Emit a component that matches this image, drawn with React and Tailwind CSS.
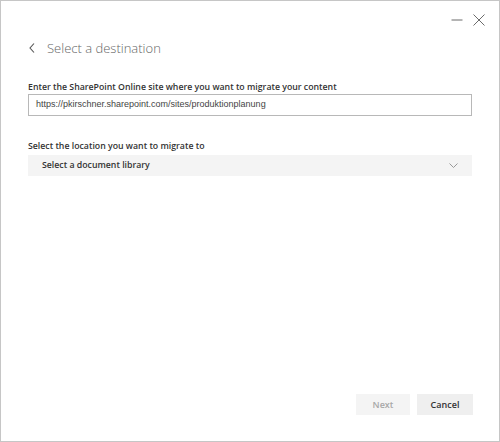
import React from 'react';

const uiFont = { fontFamily: '"Open Sans", "Noto Sans", sans-serif' };

const App = () => {
  return (
    <div className="w-[500px] h-[442px] bg-white border border-[#c6c6c6] flex flex-col text-[#333]" style={uiFont}>
      {/* Title bar */}
      <div className="h-[30px] flex justify-end items-center pr-[14px] pt-[8px] gap-[10px]">
        <svg width="12" height="12" viewBox="0 0 12 12" className="text-[#6b6b6b]">
          <line x1="0.5" y1="6" x2="11.5" y2="6" stroke="currentColor" strokeWidth="1" />
        </svg>
        <svg width="12" height="12" viewBox="0 0 12 12" className="text-[#6b6b6b]">
          <path d="M0.5 0.5 L11.5 11.5 M11.5 0.5 L0.5 11.5" stroke="currentColor" strokeWidth="1" fill="none" />
        </svg>
      </div>

      {/* Header */}
      <div className="h-[20px] mt-[7px] flex items-center pl-[28px]">
        <svg width="6" height="10" viewBox="0 0 6 10" className="text-[#555]">
          <path d="M5 0.5 L1 5 L5 9.5" stroke="currentColor" strokeWidth="1.1" fill="none" />
        </svg>
        <span className="ml-[12px] text-[13px] font-light text-[#666] leading-[20px]">Select a destination</span>
      </div>

      {/* Form */}
      <div className="px-[27px] mt-[22px]">
        <div className="text-[8.75px] font-semibold leading-[14px] text-[#333]">
          Enter the SharePoint Online site where you want to migrate your content
        </div>
        <div
          className="h-[22px] border border-[#b8b8b8] flex items-center pl-[7px] text-[9px] text-[#444]"
          style={{ fontFamily: '"Liberation Sans", Arial, sans-serif' }}
        >
          https://pkirschner.sharepoint.com/sites/produktionplanung
        </div>

        <div className="mt-[23px] text-[8.75px] font-semibold leading-[14px] text-[#333]">
          Select the location you want to migrate to
        </div>
        <div className="mt-[2px] h-[21px] bg-[#f4f4f4] flex items-center justify-between pl-[14px] pr-[14px]">
          <span className="text-[8.75px] font-semibold text-[#333]">Select a document library</span>
          <svg width="9" height="5" viewBox="0 0 9 5" className="text-[#999]">
            <path d="M0.5 0.5 L4.5 4.5 L8.5 0.5" stroke="currentColor" strokeWidth="1" fill="none" />
          </svg>
        </div>
      </div>

      <div className="flex-1" />

      {/* Footer */}
      <div className="flex justify-end gap-[7px] pr-[26px] pb-[26px]">
        <button className="w-[54px] h-[21px] bg-[#f4f4f4] text-[9px] font-semibold text-[#a8a8a8]">Next</button>
        <button className="w-[56px] h-[21px] bg-[#efefef] text-[9px] font-semibold text-[#333]">Cancel</button>
      </div>
    </div>
  );
};

export default App;
